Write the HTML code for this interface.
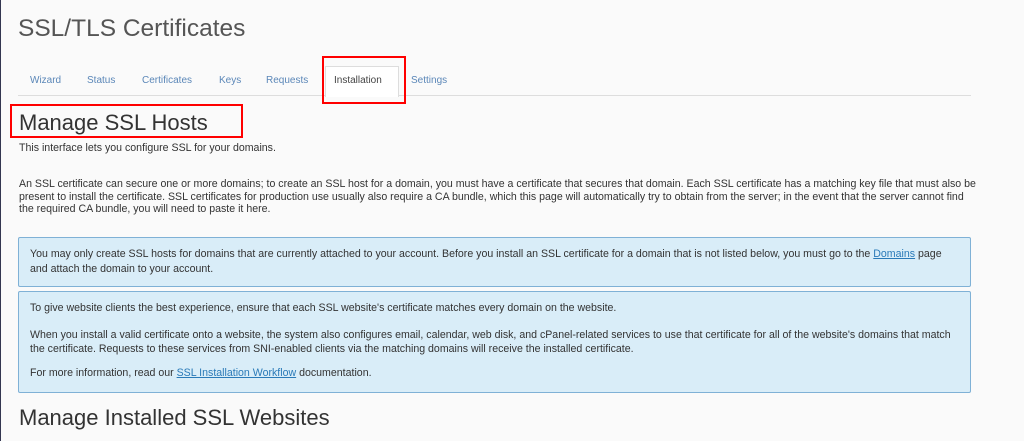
<!DOCTYPE html>
<html><head><style>
body{margin:0;width:1024px;height:441px;background:#fafafa;font-family:"Liberation Sans",sans-serif;color:#333;position:relative;overflow:hidden}
.a{position:absolute;white-space:nowrap}
.s{font-size:10.6px;line-height:12.5px}
.tab{position:absolute;top:75px;font-size:10px;color:#5b87b8}
.box{position:absolute;left:18px;width:951px;background:#d9edf8;border:1px solid #7fb1d6;border-radius:2px}
a{color:#2a7ab8;text-decoration:underline}
.red{position:absolute;border:2px solid #f00}
</style></head><body>
<div style="position:absolute;left:0;top:0;width:1px;height:441px;background:#333650"></div>
<div class="a" style="left:18px;top:15px;font-size:24.5px;color:#555;font-weight:300">SSL/TLS Certificates</div>
<div style="position:absolute;left:18px;top:95px;width:953px;height:1px;background:#ddd"></div>
<div style="position:absolute;left:325px;top:66px;width:72px;height:30px;background:#fff;border:1px solid #ddd;border-bottom:none"></div>
<span class="tab" style="left:30px">Wizard</span>
<span class="tab" style="left:87px">Status</span>
<span class="tab" style="left:142px">Certificates</span>
<span class="tab" style="left:219px">Keys</span>
<span class="tab" style="left:266px">Requests</span>
<span class="tab" style="left:334px;color:#444">Installation</span>
<span class="tab" style="left:411px">Settings</span>
<div class="red" style="left:322px;top:56px;width:80px;height:44px"></div>
<div class="a" style="left:19px;top:110px;font-size:22px;color:#333">Manage SSL Hosts</div>
<div class="red" style="left:10px;top:104px;width:229px;height:30px"></div>
<div class="a s" style="left:19px;top:142px">This interface lets you configure SSL for your domains.</div>
<div class="a s" style="left:19px;top:178px">An SSL certificate can secure one or more domains; to create an SSL host for a domain, you must have a certificate that secures that domain. Each SSL certificate has a matching key file that must also be<br>present to install the certificate. SSL certificates for production use usually also require a CA bundle, which this page will automatically try to obtain from the server; in the event that the server cannot find<br>the required CA bundle, you will need to paste it here.</div>
<div class="box" style="top:237px;height:48px"></div>
<div class="a s" style="left:30px;top:247px;line-height:15px">You may only create SSL hosts for domains that are currently attached to your account. Before you install an SSL certificate for a domain that is not listed below, you must go to the <a>Domains</a> page<br>and attach the domain to your account.</div>
<div class="box" style="top:291px;height:100px"></div>
<div class="a s" style="left:30px;top:302px">To give website clients the best experience, ensure that each SSL website's certificate matches every domain on the website.</div>
<div class="a s" style="left:30px;top:329px;line-height:13.5px">When you install a valid certificate onto a website, the system also configures email, calendar, web disk, and cPanel-related services to use that certificate for all of the website's domains that match<br>the certificate. Requests to these services from SNI-enabled clients via the matching domains will receive the installed certificate.</div>
<div class="a s" style="left:30px;top:367px">For more information, read our <a>SSL Installation Workflow</a> documentation.</div>
<div class="a" style="left:19px;top:405px;font-size:22px;color:#333">Manage Installed SSL Websites</div>
</body></html>
